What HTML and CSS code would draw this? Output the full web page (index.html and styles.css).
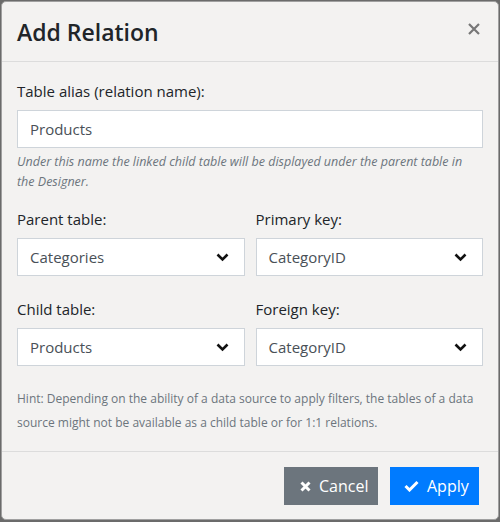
FILE: index.html
```html
<!DOCTYPE html>
<html>
   <head>
      <meta charset="utf-8">
      <title>Add Relation</title>
      <link rel="stylesheet" href="styles.css">
   </head>
   <body>
      <div class="dialog">
         <div class="dialog-header">
            <h5 class="dialog-title">Add Relation</h5>
            <span class="close">
               <svg width="12" height="12" viewBox="0 0 12 12"><path d="M1 1L11 11M11 1L1 11" stroke="#777" stroke-width="2.2" fill="none"/></svg>
            </span>
         </div>
         <div class="dialog-body">
            <label class="label">Table alias (relation name):</label>
            <div class="input">Products</div>
            <div class="help">Under this name the linked child table will be displayed under the parent table in the Designer.</div>

            <div class="row first">
               <div class="col">
                  <label class="label">Parent table:</label>
                  <div class="input select">Categories
                     <svg class="chev" width="13" height="9" viewBox="0 0 13 9"><path d="M1.5 1.5L6.5 6.5L11.5 1.5" stroke="#111" stroke-width="2.6" fill="none"/></svg>
                  </div>
               </div>
               <div class="col">
                  <label class="label">Primary key:</label>
                  <div class="input select">CategoryID
                     <svg class="chev" width="13" height="9" viewBox="0 0 13 9"><path d="M1.5 1.5L6.5 6.5L11.5 1.5" stroke="#111" stroke-width="2.6" fill="none"/></svg>
                  </div>
               </div>
            </div>
            <div class="row second">
               <div class="col">
                  <label class="label">Child table:</label>
                  <div class="input select">Products
                     <svg class="chev" width="13" height="9" viewBox="0 0 13 9"><path d="M1.5 1.5L6.5 6.5L11.5 1.5" stroke="#111" stroke-width="2.6" fill="none"/></svg>
                  </div>
               </div>
               <div class="col">
                  <label class="label">Foreign key:</label>
                  <div class="input select">CategoryID
                     <svg class="chev" width="13" height="9" viewBox="0 0 13 9"><path d="M1.5 1.5L6.5 6.5L11.5 1.5" stroke="#111" stroke-width="2.6" fill="none"/></svg>
                  </div>
               </div>
            </div>
            <div class="hint">Hint: Depending on the ability of a data source to apply filters, the tables of a data source might not be available as a child table or for 1:1 relations.</div>
         </div>
         <div class="dialog-footer">
            <span class="btn btn-cancel">
               <svg width="11" height="11" viewBox="0 0 11 11"><path d="M1.5 1.5L9.5 9.5M9.5 1.5L1.5 9.5" stroke="#fff" stroke-width="3" fill="none"/></svg>
               Cancel
            </span>
            <span class="btn btn-apply">
               <svg width="15" height="12" viewBox="0 0 15 12"><path d="M1.5 6L5.5 10L13.5 2" stroke="#fff" stroke-width="3" fill="none"/></svg>
               Apply
            </span>
         </div>
      </div>
   </body>
</html>
```

FILE: styles.css
```css
html, body{
margin: 0;
padding: 0;
}
body{
background-color: #6b6b6b;
height: 522px;
overflow: hidden;
font-family: "Open Sans", "Noto Sans", sans-serif;
color: #212529;
}
.dialog{
box-sizing: border-box;
margin: 1px 0 0 1px;
width: 498px;
height: 519px;
background-color: #f3f2f1;
border: 1px solid #a0a0a0;
border-radius: 5px;
display: flex;
flex-direction: column;
}
.dialog-header{
display: flex;
justify-content: space-between;
align-items: center;
padding: 16px 16px 15px 15px;
border-bottom: 1px solid #dcdcdc;
}
.dialog-title{
margin: 0;
font-size: 23px;
line-height: 28px;
font-weight: 600;
color: #212529;
}
.close{
display: flex;
margin-right: 2px;
margin-top: -7px;
}
.dialog-body{
padding: 17px 15px 16px 15px;
border-bottom: 1px solid #dcdcdc;
}
.label{
display: block;
font-size: 15px;
line-height: 24px;
margin-bottom: 7px;
}
.input{
box-sizing: border-box;
height: 38px;
background-color: #ffffff;
border: 1px solid #ced4da;
padding: 0 12px;
font-size: 15px;
line-height: 36px;
color: #495057;
}
.select{
display: flex;
justify-content: space-between;
align-items: center;
padding-right: 15px;
}
.help{
margin-top: 4px;
padding-right: 16px;
font-size: 12.5px;
line-height: 20px;
font-style: italic;
color: #6c757d;
}
.row{
display: flex;
gap: 11px;
}
.col{
flex: 1;
}
.row.first{
margin-top: 15px;
}
.row.second{
margin-top: 21px;
}
.hint{
margin-top: 21px;
font-size: 12px;
line-height: 24px;
color: #6c757d;
}
.dialog-footer{
display: flex;
justify-content: flex-end;
gap: 12px;
padding: 15px 19px 0 0;
}
.btn{
box-sizing: border-box;
height: 38px;
display: flex;
align-items: center;
gap: 8px;
font-size: 16px;
color: #ffffff;
}
.btn-cancel{
width: 94px;
padding-left: 16px;
background-color: #6c757d;
}
.btn-apply{
width: 89px;
padding-left: 14px;
background-color: #007bff;
}
```
